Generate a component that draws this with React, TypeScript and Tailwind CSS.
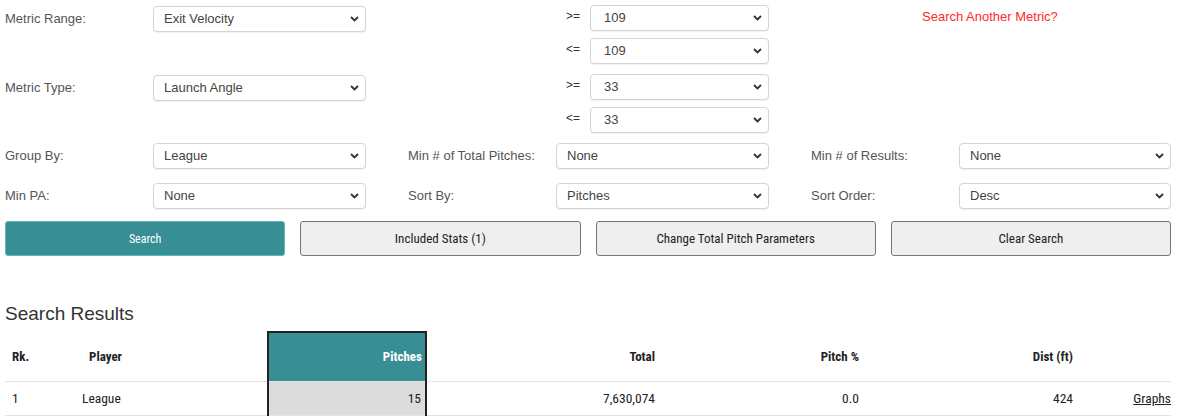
import { ReactNode } from "react";

const labelFont = { fontFamily: '"Liberation Sans", Arial, sans-serif' };
const condFont = {
  fontFamily: '"Roboto Condensed", "Liberation Sans Narrow", "DejaVu Sans Condensed", sans-serif',
};

const Chevron = () => (
  <svg
    className="pointer-events-none absolute right-[7px] top-1/2 -translate-y-1/2"
    width="9"
    height="6"
    viewBox="0 0 9 6"
  >
    <path d="M1 1l3.5 3.5L8 1" fill="none" stroke="#333" strokeWidth="1.8" />
  </svg>
);

const Select = ({
  value,
  width,
  indent = "pl-[10px]",
}: {
  value: string;
  width: string;
  indent?: string;
}) => (
  <div className={`relative ${width} h-[26px]`}>
    <select
      defaultValue={value}
      className={`block h-full w-full appearance-none rounded-[4px] border border-[#d4d4d4] bg-white ${indent} text-[13px] text-[#444] shadow-[0_1px_1px_rgba(0,0,0,0.06)] outline-none`}
      style={labelFont}
    >
      <option>{value}</option>
    </select>
    <Chevron />
  </div>
);

const Label = ({ children }: { children: ReactNode }) => (
  <div
    className="flex h-[26px] w-[148px] shrink-0 items-center text-[13px] text-[#555]"
    style={labelFont}
  >
    {children}
  </div>
);

const Field = ({ label, value }: { label: string; value: string }) => (
  <div className="flex w-[403px]">
    <Label>{label}</Label>
    <Select value={value} width="w-[213px]" />
  </div>
);

const Bound = ({ op, value }: { op: string; value: string }) => (
  <div className="flex h-[26px] w-[213px]">
    <span
      className="w-[34px] pl-[10px] pt-[5px] text-[12px] leading-none text-[#333]"
      style={labelFont}
    >
      {op}
    </span>
    <Select value={value} width="w-[179px]" indent="pl-[13px]" />
  </div>
);

const RangeRow = ({
  label,
  value,
  low,
  high,
  aside,
}: {
  label: string;
  value: string;
  low: string;
  high: string;
  aside?: ReactNode;
}) => (
  <div className="flex h-[59px]">
    <div className="w-[403px] pt-px">
      <Field label={label} value={value} />
    </div>
    <div className="flex w-[403px]">
      <div className="w-[148px]" />
      <div className="flex flex-col gap-[7px]">
        <Bound op=">=" value={low} />
        <Bound op="<=" value={high} />
      </div>
    </div>
    <div className="w-[360px]">{aside}</div>
  </div>
);

const Button = ({ children, primary }: { children: ReactNode; primary?: boolean }) => (
  <button
    className={
      primary
        ? "h-[35px] flex-1 rounded-[3px] border border-[#59bcc4] bg-[#388e95] text-[12px] text-white"
        : "h-[35px] flex-1 rounded-[3px] border border-[#767676] bg-[#efefef] text-[13px] text-[#222]"
    }
    style={condFont}
  >
    {children}
  </button>
);

export default function App() {
  return (
    <div className="ml-[5px] w-[1166px] bg-white pt-[5px]">
      <RangeRow
        label="Metric Range:"
        value="Exit Velocity"
        low="109"
        high="109"
        aside={
          <a
            className="block pl-[111px] pt-[2px] text-[13px] text-[#ff2a2a]"
            style={labelFont}
          >
            Search Another Metric?
          </a>
        }
      />
      <div className="mt-[10px]">
        <RangeRow label="Metric Type:" value="Launch Angle" low="33" high="33" />
      </div>

      <div className="mt-[10px] flex">
        <Field label="Group By:" value="League" />
        <Field label="Min # of Total Pitches:" value="None" />
        <div className="flex">
          <Label>Min # of Results:</Label>
          <Select value="None" width="w-[212px]" />
        </div>
      </div>
      <div className="mt-[14px] flex">
        <Field label="Min PA:" value="None" />
        <Field label="Sort By:" value="Pitches" />
        <div className="flex">
          <Label>Sort Order:</Label>
          <Select value="Desc" width="w-[212px]" />
        </div>
      </div>

      <div className="mt-[12px] flex gap-[15px]">
        <Button primary>Search</Button>
        <Button>Included Stats (1)</Button>
        <Button>Change Total Pitch Parameters</Button>
        <Button>Clear Search</Button>
      </div>

      <h2 className="mt-[47px] text-[19px] leading-[22px] text-[#333]" style={labelFont}>
        Search Results
      </h2>

      <table className="mt-[6px] w-full border-collapse text-[13px] text-[#222]" style={condFont}>
        <thead>
          <tr className="h-[49px] border-b border-[#e3e3e3] font-bold">
            <th className="w-[65px] pl-[7px] text-left">Rk.</th>
            <th className="w-[198px] pl-[19px] text-left">Player</th>
            <th className="w-[158px] border-x-2 border-t-2 border-[#222] bg-[#388e95] pr-[3px] text-right text-white">
              Pitches
            </th>
            <th className="w-[229px] text-right">Total</th>
            <th className="w-[204px] text-right">Pitch %</th>
            <th className="w-[214px] text-right">Dist (ft)</th>
            <th></th>
          </tr>
        </thead>
        <tbody className="text-[13.5px]">
          <tr className="h-[34px] border-b border-[#e3e3e3]">
            <td className="pl-[7px]">1</td>
            <td className="pl-[12px]">League</td>
            <td className="border-x-2 border-[#222] bg-[#dcdcdc] pr-[4px] text-right">15</td>
            <td className="text-right">7,630,074</td>
            <td className="text-right">0.0</td>
            <td className="text-right">424</td>
            <td className="text-right">
              <a className="underline">Graphs</a>
            </td>
          </tr>
        </tbody>
      </table>
    </div>
  );
}
